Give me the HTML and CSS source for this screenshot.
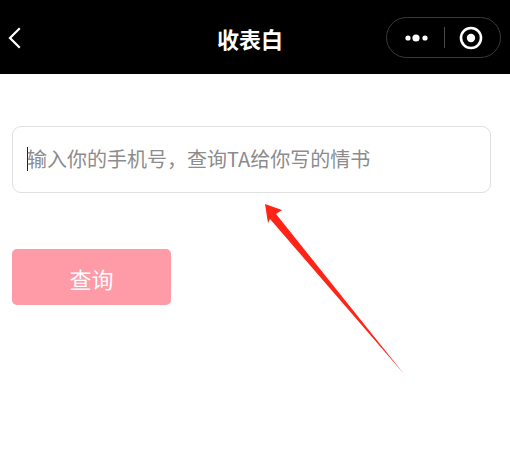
FILE: index.html
```html
<!DOCTYPE html>
<html lang="zh-CN">
<head>
<meta charset="utf-8">
<title>收表白</title>
<link rel="stylesheet" href="styles.css">
</head>
<body>
<header class="navbar">
  <div class="nav-left">
    <svg class="back" width="16" height="24" viewBox="0 0 16 24"><polyline points="11,3 2,12 11,21" fill="none" stroke="#fff" stroke-width="2.2" stroke-linecap="square"/></svg>
  </div>
  <h1 class="title">收表白</h1>
  <div class="nav-right">
    <div class="capsule">
      <div class="cap-btn">
        <svg width="36" height="10" viewBox="0 0 36 10"><circle cx="7" cy="5" r="2.6" fill="#fff"/><circle cx="15" cy="5" r="3.6" fill="#fff"/><circle cx="24" cy="5" r="2.6" fill="#fff"/></svg>
      </div>
      <div class="cap-divider"></div>
      <div class="cap-btn">
        <svg width="26" height="26" viewBox="0 0 26 26"><circle cx="13" cy="13" r="10" fill="none" stroke="#fff" stroke-width="2.6"/><circle cx="13" cy="13" r="4.2" fill="#fff"/></svg>
      </div>
    </div>
  </div>
</header>
<main class="content">
  <div class="field">
    <span class="caret"></span><span class="placeholder">输入你的手机号，查询TA给你写的情书</span>
  </div>
  <div class="btn">查询</div>
</main>
<svg class="arrow" width="510" height="467" viewBox="0 0 510 467"><polygon points="265,204 282,210 276,214 404,374 270,219 268,223" fill="#ff2416"/></svg>
</body>
</html>
```
FILE: styles.css
```css
html, body {
  margin: 0;
  padding: 0;
  background: #fff;
  font-family: "Microsoft YaHei", "Noto Sans CJK SC", "Noto Sans", sans-serif;
}
body {
  position: relative;
  width: 510px;
  height: 467px;
  overflow: hidden;
}
.navbar {
  height: 74px;
  background: #000;
  display: grid;
  grid-template-columns: 1fr auto 1fr;
  align-items: center;
}
.nav-left {
  display: flex;
  align-items: center;
  padding-left: 8px;
  padding-top: 2px;
}
.back { display: block; }
.title {
  margin: 0 10px 0 0;
  color: #fff;
  font-size: 22px;
  font-weight: 700;
  line-height: 1;
  padding-top: 2px;
}
.nav-right {
  display: flex;
  justify-content: flex-end;
  padding-right: 9px;
}
.capsule {
  box-sizing: border-box;
  width: 115px;
  height: 41px;
  border: 1px solid #3a3a3a;
  border-radius: 21px;
  display: flex;
  align-items: center;
  margin-top: 1px;
}
.cap-btn {
  flex: 1;
  display: flex;
  justify-content: center;
  align-items: center;
}
.cap-btn svg { display: block; }
.cap-btn:first-child { padding-left: 6px; }
.cap-btn:last-child { padding-right: 4px; }
.cap-divider {
  width: 1px;
  height: 21px;
  background: #4a4a4a;
}
.content {
  padding: 52px 19px 0 12px;
}
.field {
  box-sizing: border-box;
  height: 67px;
  border: 1px solid #e0e0e0;
  border-radius: 9px;
  display: flex;
  align-items: center;
  padding-left: 14px;
  padding-bottom: 2px;
}
.caret {
  width: 1px;
  height: 24px;
  background: #222;
  margin-right: -1px;
}
.placeholder {
  font-size: 20px;
  color: #8c8c8c;
  line-height: 24px;
}
.btn {
  margin-top: 56px;
  width: 159px;
  height: 56px;
  border-radius: 5px;
  background: #ff9ba7;
  color: #fff;
  font-size: 22px;
  display: flex;
  align-items: center;
  justify-content: center;
  padding-top: 1px;
  box-sizing: border-box;
}
.arrow {
  position: absolute;
  left: 0;
  top: 0;
  pointer-events: none;
}
```
